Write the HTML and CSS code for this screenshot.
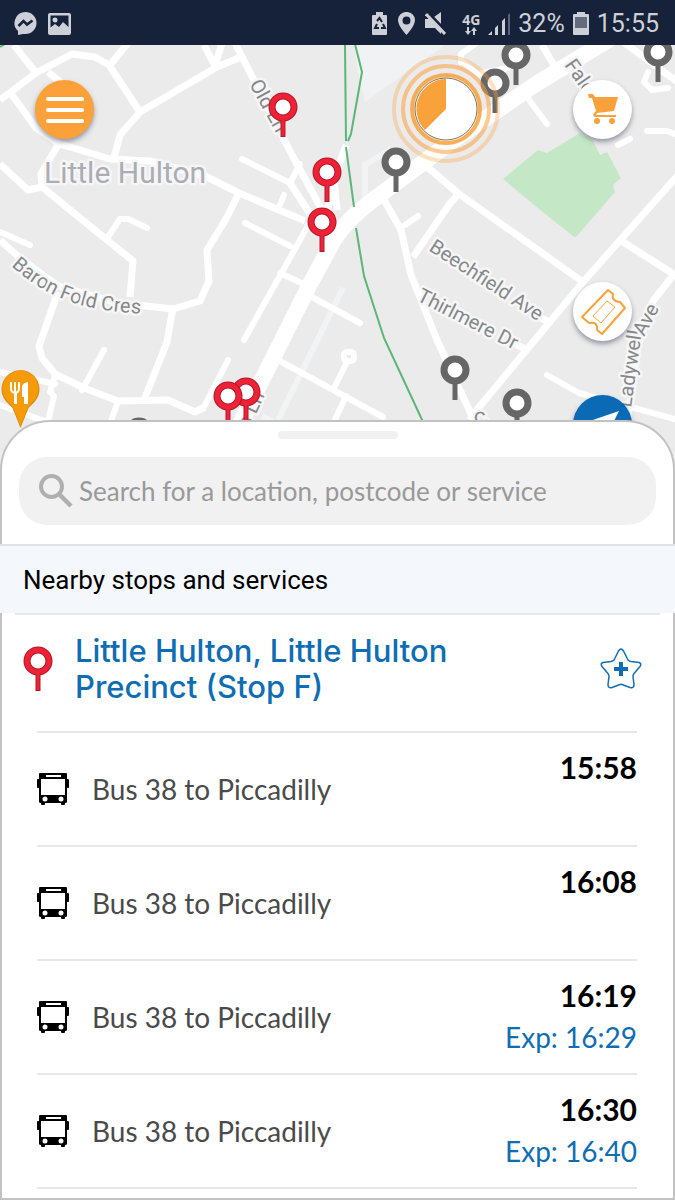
FILE: index.html
```html
<!DOCTYPE html>
<html lang="en">
<head>
<meta charset="utf-8">
<meta name="viewport" content="width=device-width, initial-scale=1">
<title>Nearby stops and services</title>
<link rel="stylesheet" href="styles.css">
</head>
<body>
<svg class="defs" aria-hidden="true">
  <symbol id="pin" viewBox="0 0 30 46">
    <path d="M15 28v17" fill="none" stroke="currentColor" stroke-width="5"/>
    <circle cx="15" cy="15" r="11" fill="#fff" stroke="currentColor" stroke-width="7"/>
  </symbol>
  <symbol id="pin-red" viewBox="0 0 30 46">
    <path d="M15 28v17" fill="none" stroke="#b5162a" stroke-width="5"/>
    <circle cx="15" cy="15" r="11" fill="#fff" stroke="#b5162a" stroke-width="7"/>
    <path d="M15 27v17" fill="none" stroke="#ee2236" stroke-width="3"/>
    <circle cx="15" cy="15" r="11" fill="none" stroke="#ee2236" stroke-width="5"/>
  </symbol>
  <symbol id="bus" viewBox="0 0 32 32">
    <path fill-rule="evenodd" d="M3 0h26q1 0 1 1v5h1q1 0 1 1v7q0 1-1 1h-1v14q0 1-2 1v1q0 1-1 1h-2q-1 0-1-1v-1H8v1q0 1-1 1H5q-1 0-1-1v-1q-2 0-2-1V15H1q-1 0-1-1V7q0-1 1-1h1V1q0-1 1-1zM9 2v2h15V2zM4 6v16h24V6zM8 23.500a2.500 2.500 0 1 0 0 5 2.500 2.500 0 0 0 0-5zM24 23.500a2.500 2.500 0 1 0 0 5 2.500 2.500 0 0 0 0-5z"/>
  </symbol>
</svg>

<header class="status">
  <svg width="23" height="23" viewBox="0 0 23 23" aria-label="Message"><path fill="#ced0d8" d="M11.500 0a11 11 0 0 1 0 22H9l-5 1v-4A11 11 0 0 1 11.500 0z"/><path d="M4.500 14l5-5 3.500 3.500 5.500-4" fill="none" stroke="#16213a" stroke-width="2.500"/></svg>
  <svg class="status-picture" width="23" height="22" viewBox="0 0 23 22" aria-label="Picture"><path fill="#ced0d8" fill-rule="evenodd" d="M2 0h19q2 0 2 2v18q0 2-2 2H2q-2 0-2-2V2q0-2 2-2zM2.500 2.500v12L7 11l4 3 4-5 5.500 5V2.500zM7 4.500a2.500 2.500 0 1 1 0 5 2.500 2.500 0 0 1 0-5z"/></svg>
  <div class="status-right">
    <svg width="15" height="23" viewBox="0 0 15 23" aria-label="Battery saver"><path fill="#ced0d8" d="M4 0h7v3h3q1 0 1 1v18q0 1-1 1H1q-1 0-1-1V4q0-1 1-1h3z"/><path d="M5 9l2.500-3 2.500 4M11 12l2 4h-4M7 16H3l2-4" fill="none" stroke="#16213a" stroke-width="2"/></svg>
    <svg class="status-place" width="17" height="23" viewBox="0 0 17 23" aria-label="Location"><path fill="#ced0d8" fill-rule="evenodd" d="M8.500 0A8 8 0 0 1 17 8c0 6-8.500 15-8.500 15S0 14 0 8a8 8 0 0 1 8.500-8zm0 4.500a4 4 0 1 0 0 8 4 4 0 0 0 0-8z"/></svg>
    <svg class="status-mute" width="21" height="23" viewBox="0 0 21 23" aria-label="Muted"><path fill="#ced0d8" d="M0 7h6l10 10v5l-6-6H0zM9 5l7-5v12z"/><path d="M6 3l12 13" stroke="#16213a" stroke-width="2"/><path d="M1 2l19 20" stroke="#ced0d8" stroke-width="3"/></svg>
    <span class="network">4G<svg width="14" height="8" viewBox="0 0 14 8" aria-hidden="true"><path fill="#ced0d8" d="M3 0h2v4h2L4 8 1 4h2zM9 8h2V4h2l-3-4-3 4h2z"/></svg></span>
    <svg class="status-signal" width="22" height="22" viewBox="0 0 22 22" aria-label="Signal"><path fill="#ced0d8" d="M0 22l4-4v4zM7 15l3-3v10H7zM14 8l3-3v17h-3z"/><path fill="#5a6377" d="M20 2l2-2v22h-2z"/></svg>
    <span>32%</span>
    <svg class="status-battery" width="16" height="23" viewBox="0 0 16 23" aria-label="Battery"><path fill="#ced0d8" d="M4 0h8v2h3q1 0 1 1v19q0 1-1 1H1q-1 0-1-1V3q0-1 1-1h3z"/><path fill="#646b7f" d="M2 5h12v11H2z"/></svg>
    <span>15:55</span>
  </div>
</header>

<main class="screen">
  <section class="map" aria-label="Map">
    <svg class="map-canvas" viewBox="0 45 675 435" preserveAspectRatio="xMidYMin slice">
      <path class="pale" d="M355 45h90L365 102l-7-30z"/>
      <path class="path" d="M368 200l-3-3v-32l26-16M343 288l-65 132M262 416l12 6"/>
      <path class="park" d="M503 179l35-29 9 3 33-20 12 6 8 16 7-3 14 26-8 7 2 7-38 44q-2 2-4 0l-34-27z"/>
      <g class="road minor">
        <path d="M630 139l-12 6M647 131h20l8 3M461 62v-8l14-10M463 62l15 12 30-6M648 72l-4 10 8 8 16-2"/>
        <path d="M0 232l30 13M108 237l12-18h8l19 9M104 350l-22 40M242 159l48 24 10-19M280 205l4-10M245 223l45 23M244 340l66-118M280 273l30 14M312 297l48 26M278 360l105 57M346 396l-14 30M347 362l-13 26M228 360l-23 45M405 225l13-9M523 92l24 32M547 375l32 18 96 26"/>
        <path d="M55 376l-5 16 4 4-8 34M118 401l-10 29M0 372l55 12M0 405l50 18"/>
      </g>
      <rect class="loop" x="344" y="352" width="10" height="9" rx="3"/>
      <g class="road">
        <path d="M0 100l36-27 36-19 23 3 14 8 31 47-20 23-6 23M14 45l22 28M110 65l18-22M12 95l24 33 24 16 50 15 40 2 55 15 34 17 66 28M48 72l22 18M140 112l77-45 24-10M204 45l11 21 7-23M58 145l-17 29 1 13M0 164l28 26 14-3 38 31 53 43-3 36"/>
        <path d="M0 240l20 18 38 28 60 17 55 6 27-8 9-20-2-31 19-31 13-26M58 292l-19 54 3 12 13 16 29 14 34 13 50-1 27 12 10-5M173 308l-6 34-23 58M290 183l24 37"/>
        <path d="M383 198l18 32 10 45 10 25 16 40 35 76M413 257l38-55 8-8M425 165l34 29 124 88M470 420l5-8 108-130L679 174M542 45l13 22M622 41l57 42M623 242l52 33M675 273l-22 28-15 44-12 85M535 315l14 7M511 342l14 7"/>
        <path d="M235 43l57 112 34 62M346 145l-12 35-9 42M334 180l3 30"/>
      </g>
      <path class="road major" d="M238 428l72-144 24-44q12-20 39-40l78-58 85-58 74-45"/>
      <path class="trail" d="M345 44l1 97M355 44l7 28-11 62-3 7M346 147l8 60M356 228l8 48 20 62 40 86M0 47l5-3"/>
      <g class="label">
        <text class="town" x="44" y="183">Little Hulton</text>
        <text transform="translate(249 84) rotate(61)">Old Ln</text>
        <path id="baron" d="M11 266q28 25 60 36 36 12 90 12" fill="none" stroke="none"/>
        <text><textPath href="#baron">Baron Fold Cres</textPath></text>
        <text transform="translate(564 65) rotate(55)">Falcon</text>
        <text transform="translate(428 250) rotate(33)">Beechfield Ave</text>
        <text transform="translate(416 300) rotate(27)">Thirlmere Dr</text>
        <text transform="translate(631 408) rotate(-82)">Ladywell</text>
        <text transform="translate(644 337) rotate(-62)">Ave</text>
        <text transform="translate(245 438) rotate(-65)">ss Ln</text>
        <text transform="translate(477 428) rotate(-20)">C</text>
      </g>
      <g class="stops">
        <use href="#pin" x="501" y="40" width="30" height="46"/>
        <use href="#pin" x="480" y="68" width="30" height="46"/>
        <use href="#pin" x="643" y="37" width="30" height="46"/>
        <use href="#pin" x="381" y="147" width="30" height="46"/>
        <use href="#pin" x="440" y="355" width="30" height="46"/>
        <use href="#pin" x="502" y="388" width="30" height="46"/>
        <use href="#pin" x="124" y="417" width="30" height="46"/>
        <use href="#pin-red" x="268" y="92" width="30" height="46"/>
        <use href="#pin-red" x="312" y="157" width="30" height="46"/>
        <use href="#pin-red" x="307" y="207" width="30" height="46"/>
        <use href="#pin-red" x="231" y="377" width="30" height="46"/>
        <use href="#pin-red" x="213" y="381" width="30" height="46"/>
      </g>
      <path fill="#d98a0c" d="M20.500 428l-8-20-6-6a19 19 0 1 1 28 0l-6 6z"/>
      <path fill="#f59b08" d="M20.500 426l-7-18-6-7a18 18 0 1 1 26 0l-6 7z"/>
      <path d="M11 382v7q0 3 4 4v10M19 382v7q0 3-4 4M15 382v20" fill="none" stroke="#fff" stroke-width="2"/>
      <path fill="#fff" d="M14 393h3v11h-3zM24 404v-7h-2v-10q0-4 6-5v22z"/>
    </svg>

    <div class="controls">
      <button class="round menu" aria-label="Menu"><span></span><span></span><span></span></button>
      <button class="timer" aria-label="Active ticket">
        <svg width="110" height="110" viewBox="0 0 110 110">
          <g fill="none" stroke="#f9a13a">
            <circle cx="55" cy="55" r="52" stroke-width="4" opacity=".32"/>
            <circle cx="55" cy="55" r="43" stroke-width="4" opacity=".55"/>
            <circle cx="55" cy="55" r="34" stroke-width="4" opacity=".85"/>
          </g>
          <circle cx="55" cy="55" r="31" fill="#fff" stroke="#8a7356"/>
          <path fill="#f9a13a" d="M55 55V25a30 30 0 0 0-21 51z"/>
        </svg>
      </button>
      <div class="side">
        <button class="round" aria-label="Basket">
          <svg width="30" height="31" viewBox="0 0 30 31"><path fill="#f9a13a" d="M0 0h5l2 3h23l-4 14-17 2-1 2h20v2H8q-4 0-2-4l2-2L4 4H1z"/><circle cx="9" cy="27" r="3" fill="#f9a13a"/><circle cx="24" cy="27" r="3" fill="#f9a13a"/></svg>
        </button>
        <button class="round" aria-label="Tickets">
          <svg width="48" height="48" viewBox="0 0 48 48" fill="none" stroke="#f9a13a"><path stroke-width="2" stroke-linejoin="round" d="M29 2l5 4q-2 7 7 8l5 6-23 26-5-4q1-9-8-7l-7-6z"/><path stroke-width="1" d="M28 13l8 6-14 16-8-7z"/></svg>
        </button>
        <button class="round locate" aria-label="My location">
          <svg width="34" height="30" viewBox="0 0 34 30"><path fill="#fff" d="M33 1L1 12l13 4 5 13z"/></svg>
        </button>
      </div>
    </div>
  </section>

  <section class="sheet">
    <div class="handle"></div>
    <label class="search">
      <svg width="34" height="34" viewBox="0 0 34 34" fill="none" stroke="#afafaf" aria-hidden="true"><circle cx="12.500" cy="12.500" r="10.500" stroke-width="4"/><path d="M20 20l12 12" stroke-width="4.500"/></svg>
      <input type="search" aria-label="Search" placeholder="Search for a location, postcode or service">
    </label>
    <h1 class="heading">Nearby stops and services</h1>
    <div class="stop">
      <svg width="30" height="46" aria-hidden="true"><use href="#pin-red"/></svg>
      <h2><a href="#stop">Little Hulton, Little Hulton Precinct (Stop F)</a></h2>
      <button class="favourite" aria-label="Add to favourites">
        <svg width="42" height="42" viewBox="0 0 42 42" fill="none" stroke="#0f6db3"><path stroke-width="1.500" stroke-linejoin="round" d="M18.500 3q2.500-4 5 0l4.500 9q1 1 3 1.500l8 1q3 1 1 4l-6 7q-1 1-1 3l1 8q0 4-4 3l-8-3q-1-.5-2 0l-8 3q-4 1-4-3l1-8q0-2-1-3l-6-7q-2-3 1-4l8-1q2-.5 3-1.500z"/><path stroke-width="4" d="M14 21h14M21 14v14"/></svg>
      </button>
    </div>
    <ul class="services">
      <li><svg width="32" height="32" aria-hidden="true"><use href="#bus"/></svg><span class="route">Bus 38 to Piccadilly</span><div class="times"><time>15:58</time></div></li>
      <li><svg width="32" height="32" aria-hidden="true"><use href="#bus"/></svg><span class="route">Bus 38 to Piccadilly</span><div class="times"><time>16:08</time></div></li>
      <li><svg width="32" height="32" aria-hidden="true"><use href="#bus"/></svg><span class="route">Bus 38 to Piccadilly</span><div class="times"><time>16:19</time><span class="expected">Exp: 16:29</span></div></li>
      <li><svg width="32" height="32" aria-hidden="true"><use href="#bus"/></svg><span class="route">Bus 38 to Piccadilly</span><div class="times"><time>16:30</time><span class="expected">Exp: 16:40</span></div></li>
    </ul>
  </section>
</main>
</body>
</html>
```
FILE: styles.css
```css
* {
  box-sizing: border-box;
}

body {
  margin: 0;
  min-height: 100vh;
  display: flex;
  flex-direction: column;
  background: #fff;
  font-family: Lato, sans-serif;
}

svg {
  display: block;
  flex: none;
}

button {
  padding: 0;
  border: 0;
  background: none;
}

.defs {
  position: absolute;
  width: 0;
  height: 0;
}

/* Status bar */
.status {
  display: flex;
  align-items: center;
  height: 45px;
  padding: 2px 16px 0 14px;
  background: #16213a;
  color: #ced0d8;
  font: 25px/32px Roboto, sans-serif;
}

.status-picture {
  margin-left: 11px;
}

.status-right {
  display: flex;
  align-items: center;
  margin-left: auto;
}

.status-place {
  margin-left: 11px;
}

.status-mute {
  margin-left: 10px;
}

.network {
  display: flex;
  flex-direction: column;
  align-items: center;
  margin: 0 8px 0 16px;
  font: bold 14px/14px "Noto Sans", sans-serif;
}

.status-signal {
  margin-right: 8px;
}

.status-battery {
  margin: 0 8px;
}

/* Map */
.screen {
  flex: 1;
  display: flex;
  flex-direction: column;
}

.map {
  position: relative;
  height: 435px;
  background: #ebebeb;
}

.map-canvas {
  width: 100%;
  height: 100%;
}

.road {
  fill: none;
  stroke: #fff;
  stroke-width: 7px;
  stroke-linejoin: round;
}

.minor {
  stroke-width: 6px;
  stroke-linecap: round;
}

.major {
  stroke-width: 16px;
}

.loop {
  fill: #ebebeb;
  stroke: #fff;
  stroke-width: 6px;
}

.pale {
  fill: #f0f2f4;
}

.path {
  fill: none;
  stroke: #f1f3f5;
  stroke-width: 6px;
}

.park {
  fill: #c4e8c5;
}

.trail {
  fill: none;
  stroke: #5bb678;
  stroke-width: 2px;
}

.label {
  fill: #85888b;
  stroke: #f6f6f6;
  stroke-width: 5px;
  stroke-linejoin: round;
  paint-order: stroke;
  font: 20px Roboto, sans-serif;
}

.town {
  fill: #aaadb4;
  font-size: 30px;
}

.stops {
  color: #666;
}

.controls {
  position: absolute;
  inset: 0;
  display: flex;
  align-items: flex-start;
  padding: 35px 43px 0 35px;
}

.round {
  display: flex;
  align-items: center;
  justify-content: center;
  width: 59px;
  height: 59px;
  border-radius: 50%;
  background: #fff;
  box-shadow: 0 3px 5px rgba(60, 70, 90, 0.5);
}

.menu {
  flex-direction: column;
  gap: 7px;
  background: #fca13a;
}

.menu span {
  width: 38px;
  height: 4px;
  border-radius: 2px;
  background: #fff;
}

.timer {
  margin: -26px 72px 0 auto;
}

.side {
  display: flex;
  flex-direction: column;
}

.side .round + .round {
  margin-top: 143px;
}

.side .round + .locate {
  margin-top: 54px;
  background: #0b6ab5;
}

/* Bottom sheet */
.sheet {
  position: relative;
  flex: 1;
  margin-top: -60px;
  border: 2px solid #c2c2c2;
  border-radius: 50px 50px 0 0;
  background: #fff;
}

.handle {
  width: 120px;
  height: 8px;
  margin: 9px auto 18px;
  border-radius: 4px;
  background: #f1f1f1;
}

.search {
  display: flex;
  align-items: center;
  gap: 6px;
  height: 68px;
  margin: 0 17px 19px;
  padding: 0 20px;
  border-radius: 28px;
  background: #f1f1f1;
}

.search input {
  flex: 1;
  min-width: 0;
  padding: 0;
  border: 0;
  outline: 0;
  background: none;
  font: 26px/36px Lato, sans-serif;
}

.search input::placeholder {
  color: #999;
  opacity: 1;
}

.heading {
  margin: 0 -2px;
  padding: 16px 23px 15px;
  border-top: 2px solid #dfe3e6;
  background: #f4f8fc;
  font: 26px/36px Roboto, sans-serif;
}

.stop {
  display: flex;
  align-items: center;
  gap: 22px;
  margin: 0 13px;
  padding: 18px 18px 26px 8px;
  border-top: 2px solid #e6e8ec;
}

.stop h2 {
  flex: 1;
  max-width: 440px;
  margin: 0;
  font: 500 31px/36px Inter, sans-serif;
}

.stop a {
  color: #0f6db3;
  text-decoration: none;
}

.favourite {
  margin-left: auto;
}

.services {
  margin: 0 36px 8px 35px;
  padding: 0;
  border-top: 2px solid #e8e8e8;
  list-style: none;
}

.services li {
  display: flex;
  align-items: center;
  gap: 23px;
  min-height: 114px;
  border-bottom: 2px solid #e8e8e8;
  color: #4a4a4a;
  font-size: 28px;
  line-height: 42px;
}

.times {
  display: flex;
  flex-direction: column;
  align-self: flex-start;
  margin-left: auto;
  padding-top: 13px;
  text-align: right;
}

.times time {
  color: #000;
  font-size: 30px;
  font-weight: bold;
}

.expected {
  color: #0f6db3;
}
```
